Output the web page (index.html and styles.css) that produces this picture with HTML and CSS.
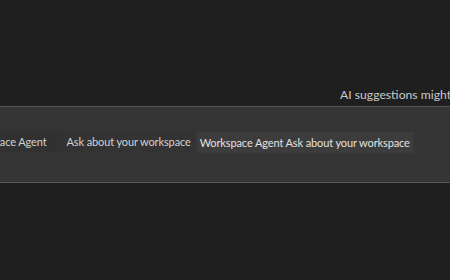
FILE: index.html
```html
<!DOCTYPE html>
<html lang="en">
<head>
    <meta charset="UTF-8">
    <title>Workspace Agent</title>
    <link rel="stylesheet" href="styles.css">
</head>
<body>

<div class="notice">AI suggestions might be inaccurate</div>

<div class="panel">
    <div class="row">
        <div class="pair">
            <span class="cell name">Workspace Agent</span>
            <span class="cell hint">Ask about your workspace</span>
        </div>
        <div class="chip">Workspace Agent Ask about your workspace</div>
    </div>
</div>

</body>
</html>
```

FILE: styles.css
```css
html, body {
    margin: 0;
    height: 100%;
}
body {
    background-color: #1f1f1f;
    font-family: Lato, "Open Sans", sans-serif;
    font-size: 11px;
    letter-spacing: -0.12px;
    color: #d2d2d2;
    overflow: hidden;
}
.notice {
    padding: 87px 0 0 340px;
    height: 19px;
    white-space: nowrap;
    font-size: 12.2px;
    letter-spacing: 0;
    color: #c8c8c8;
}
.panel {
    height: 75px;
    background-color: #353535;
    border-top: 1px solid #555555;
    border-bottom: 1px solid #5a5a5a;
    display: flex;
    align-items: center;
}
.row {
    display: flex;
    align-items: center;
    margin-left: -39px;
    margin-top: -6px;
    white-space: nowrap;
}
.pair {
    display: flex;
    background-color: #313131;
    height: 21px;
}
.cell {
    padding: 0 4px;
    line-height: 21px;
}
.name {
    padding-left: 2px;
    padding-right: 16px;
}
.hint {
    background-color: #333333;
}
.chip {
    margin-left: 2px;
    margin-top: 2px;
    padding: 0 3px;
    line-height: 21px;
    background-color: #3c3c3c;
    color: #e2e2e2;
}
```
